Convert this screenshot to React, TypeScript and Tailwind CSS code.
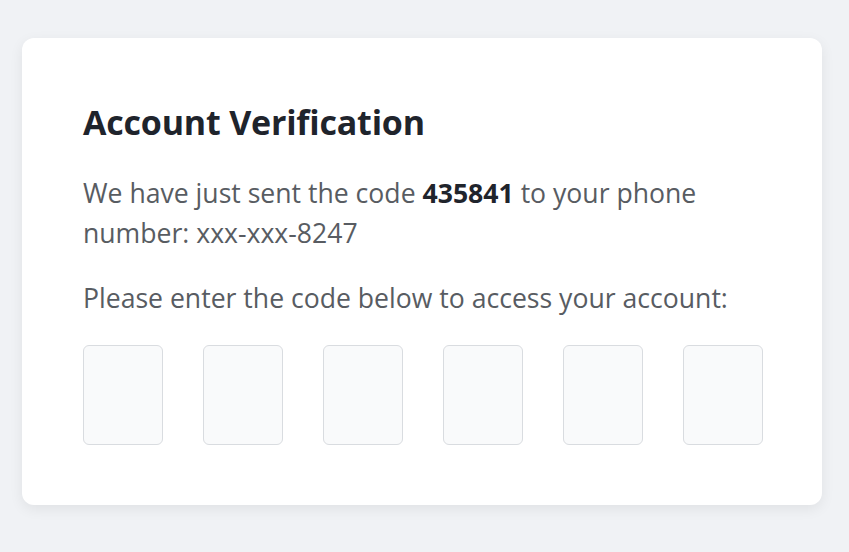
export default function App() {
  const digits = [0, 1, 2, 3, 4, 5];

  return (
    <div className="min-h-screen bg-[#f0f2f5] pt-[38px] font-['Open_Sans',sans-serif]">
      <div className="ml-[22px] w-[800px] rounded-xl bg-white pb-[60px] pl-[61px] pr-[59px] pt-[64px] shadow-[0_4px_14px_rgba(0,0,0,0.07)]">
        <h1 className="text-[34px] font-bold leading-[40px] tracking-[-0.2px] text-[#1f242c]">Account Verification</h1>

        <p className="mt-[31px] text-[26.6px] leading-[40px] text-[#585c62]">
          We have just sent the code <b className="font-bold text-[#1f242c]">435841</b> to your phone number:
          xxx-xxx-8247
        </p>

        <p className="mt-[25px] text-[26.6px] leading-[40px] text-[#585c62]">
          Please enter the code below to access your account:
        </p>

        <div className="mt-[27px] flex gap-10">
          {digits.map((d) => (
            <input
              key={d}
              type="text"
              maxLength={1}
              className="h-[100px] w-[80px] rounded-md border border-[#d9dce0] bg-[#f9fafb] text-center text-[40px] outline-none"
            />
          ))}
        </div>
      </div>
    </div>
  );
}
